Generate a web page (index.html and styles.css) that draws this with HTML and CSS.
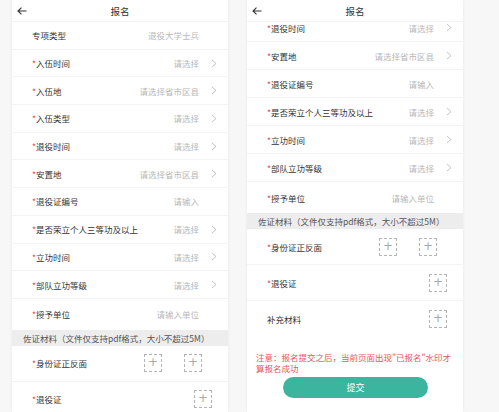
FILE: index.html
```html
<!DOCTYPE html>
<html lang="zh-CN">
<head>
  <meta charset="utf-8">
  <meta name="viewport" content="width=device-width, initial-scale=1.0">
  <title>报名</title>
  <link rel="stylesheet" href="styles.css">
</head>
<body>
  <div class="screens">

    <!-- First screen: top of the form -->
    <div class="phone phone-top">
      <div class="topbar">
        <svg class="back" width="10" height="8" viewBox="0 0 10 8"><path d="M9.5 4H1 M4.5 0.6L1 4l3.5 3.4" fill="none" stroke="#333" stroke-width="1.1"/></svg>
        <span class="title">报名</span>
      </div>
      <div class="form">
        <div class="row"><span class="label">专项类型</span><span class="value">退役大学士兵</span><span class="arrow"></span></div>
        <div class="row"><span class="label"><i>*</i>入伍时间</span><span class="value">请选择</span><span class="arrow"><svg width="6" height="9" viewBox="0 0 6 9"><polyline points="1,1 5,4.5 1,8" fill="none" stroke="#c4c4c4" stroke-width="1"/></svg></span></div>
        <div class="row"><span class="label"><i>*</i>入伍地</span><span class="value">请选择省市区县</span><span class="arrow"><svg width="6" height="9" viewBox="0 0 6 9"><polyline points="1,1 5,4.5 1,8" fill="none" stroke="#c4c4c4" stroke-width="1"/></svg></span></div>
        <div class="row"><span class="label"><i>*</i>入伍类型</span><span class="value">请选择</span><span class="arrow"><svg width="6" height="9" viewBox="0 0 6 9"><polyline points="1,1 5,4.5 1,8" fill="none" stroke="#c4c4c4" stroke-width="1"/></svg></span></div>
        <div class="row"><span class="label"><i>*</i>退役时间</span><span class="value">请选择</span><span class="arrow"><svg width="6" height="9" viewBox="0 0 6 9"><polyline points="1,1 5,4.5 1,8" fill="none" stroke="#c4c4c4" stroke-width="1"/></svg></span></div>
        <div class="row"><span class="label"><i>*</i>安置地</span><span class="value">请选择省市区县</span><span class="arrow"><svg width="6" height="9" viewBox="0 0 6 9"><polyline points="1,1 5,4.5 1,8" fill="none" stroke="#c4c4c4" stroke-width="1"/></svg></span></div>
        <div class="row"><span class="label"><i>*</i>退役证编号</span><span class="value">请输入</span><span class="arrow"></span></div>
        <div class="row"><span class="label"><i>*</i>是否荣立个人三等功及以上</span><span class="value">请选择</span><span class="arrow"><svg width="6" height="9" viewBox="0 0 6 9"><polyline points="1,1 5,4.5 1,8" fill="none" stroke="#c4c4c4" stroke-width="1"/></svg></span></div>
        <div class="row"><span class="label"><i>*</i>立功时间</span><span class="value">请选择</span><span class="arrow"><svg width="6" height="9" viewBox="0 0 6 9"><polyline points="1,1 5,4.5 1,8" fill="none" stroke="#c4c4c4" stroke-width="1"/></svg></span></div>
        <div class="row"><span class="label"><i>*</i>部队立功等级</span><span class="value">请选择</span><span class="arrow"><svg width="6" height="9" viewBox="0 0 6 9"><polyline points="1,1 5,4.5 1,8" fill="none" stroke="#c4c4c4" stroke-width="1"/></svg></span></div>
        <div class="row row-tall"><span class="label"><i>*</i>授予单位</span><span class="value">请输入单位</span><span class="arrow"></span></div>

        <div class="section">佐证材料（文件仅支持pdf格式，大小不超过5M）</div>

        <div class="row row-upload">
          <span class="label"><i>*</i>身份证正反面</span>
          <div class="uploads uploads-pair"><span class="upload">+</span><span class="upload">+</span></div>
        </div>
        <div class="row row-upload">
          <span class="label"><i>*</i>退役证</span>
          <div class="uploads"><span class="upload">+</span></div>
        </div>
      </div>
    </div>

    <!-- Second screen: scrolled to the bottom -->
    <div class="phone phone-bottom">
      <div class="topbar">
        <svg class="back" width="10" height="8" viewBox="0 0 10 8"><path d="M9.5 4H1 M4.5 0.6L1 4l3.5 3.4" fill="none" stroke="#333" stroke-width="1.1"/></svg>
        <span class="title">报名</span>
      </div>
      <div class="form">
        <div class="row"><span class="label"><i>*</i>退役时间</span><span class="value">请选择</span><span class="arrow"><svg width="6" height="9" viewBox="0 0 6 9"><polyline points="1,1 5,4.5 1,8" fill="none" stroke="#c4c4c4" stroke-width="1"/></svg></span></div>
        <div class="row"><span class="label"><i>*</i>安置地</span><span class="value">请选择省市区县</span><span class="arrow"><svg width="6" height="9" viewBox="0 0 6 9"><polyline points="1,1 5,4.5 1,8" fill="none" stroke="#c4c4c4" stroke-width="1"/></svg></span></div>
        <div class="row"><span class="label"><i>*</i>退役证编号</span><span class="value">请输入</span><span class="arrow"></span></div>
        <div class="row"><span class="label"><i>*</i>是否荣立个人三等功及以上</span><span class="value">请选择</span><span class="arrow"><svg width="6" height="9" viewBox="0 0 6 9"><polyline points="1,1 5,4.5 1,8" fill="none" stroke="#c4c4c4" stroke-width="1"/></svg></span></div>
        <div class="row"><span class="label"><i>*</i>立功时间</span><span class="value">请选择</span><span class="arrow"><svg width="6" height="9" viewBox="0 0 6 9"><polyline points="1,1 5,4.5 1,8" fill="none" stroke="#c4c4c4" stroke-width="1"/></svg></span></div>
        <div class="row"><span class="label"><i>*</i>部队立功等级</span><span class="value">请选择</span><span class="arrow"><svg width="6" height="9" viewBox="0 0 6 9"><polyline points="1,1 5,4.5 1,8" fill="none" stroke="#c4c4c4" stroke-width="1"/></svg></span></div>
        <div class="row row-tall"><span class="label"><i>*</i>授予单位</span><span class="value">请输入单位</span><span class="arrow"></span></div>

        <div class="section">佐证材料（文件仅支持pdf格式，大小不超过5M）</div>

        <div class="row row-upload">
          <span class="label"><i>*</i>身份证正反面</span>
          <div class="uploads uploads-pair"><span class="upload">+</span><span class="upload">+</span></div>
        </div>
        <div class="row row-upload">
          <span class="label"><i>*</i>退役证</span>
          <div class="uploads"><span class="upload">+</span></div>
        </div>
        <div class="row row-upload row-last">
          <span class="label">补充材料</span>
          <div class="uploads"><span class="upload">+</span></div>
        </div>

        <p class="notice">注意：报名提交之后，当前页面出现"已报名"水印才算报名成功</p>
        <button class="submit">提交</button>
      </div>
    </div>

  </div>
</body>
</html>
```

FILE: styles.css
```css
html, body {
  margin: 0;
  padding: 0;
}

body {
  width: 499px;
  height: 412px;
  overflow: hidden;
  background-color: #f7f7f7;
  font-family: "Noto Sans CJK SC", "Noto Sans", sans-serif;
  color: #333;
}

.screens {
  display: flex;
  gap: 19px;
  padding-left: 12px;
  height: 412px;
}

.phone {
  --row-h: 27.7px;
  width: 216px;
  height: 412px;
  background-color: #fff;
  box-shadow: 0 0 3px rgba(0, 0, 0, 0.07);
  overflow: hidden;
  display: flex;
  flex-direction: column;
}

.phone-bottom {
  --row-h: 28px;
}

/* Header */
.topbar {
  position: relative;
  z-index: 1;
  flex: none;
  height: 22px;
  display: flex;
  align-items: center;
  justify-content: center;
  background-color: #fff;
  border-bottom: 1px solid #f3f3f3;
  box-sizing: border-box;
}

.topbar .back {
  position: absolute;
  left: 5px;
  top: 7px;
}

.title {
  font-size: 9.5px;
  color: #333;
}

.phone-bottom .form {
  margin-top: -8px;
}

/* Form rows */
.row {
  display: flex;
  align-items: center;
  height: var(--row-h);
  padding: 0 11px 0 20px;
  border-bottom: 1px solid #f3f3f3;
  box-sizing: border-box;
  font-size: 8.5px;
}

.row-tall {
  height: 31px;
  border-bottom: none;
}

.row-upload {
  height: 36px;
}

.row-last {
  border-bottom: none;
}

.label {
  flex: 1;
  color: #333;
  white-space: nowrap;
}

.label i {
  font-style: normal;
  color: #e5484d;
}

.value {
  color: #b8b8b8;
  white-space: nowrap;
}

.arrow {
  width: 6px;
  height: 9px;
  margin-left: 12px;
  display: flex;
}

/* Evidence section */
.section {
  height: 16px;
  line-height: 16px;
  padding-left: 11px;
  background-color: #ededed;
  color: #555;
  font-size: 8.5px;
  white-space: nowrap;
}

.uploads {
  display: flex;
  gap: 22px;
  margin-right: 5px;
}

.uploads-pair {
  margin-right: 15px;
}

.upload {
  width: 18px;
  height: 18px;
  box-sizing: border-box;
  border: 1px dashed #b5b5b5;
  color: #aaa;
  font-family: "DejaVu Sans", sans-serif;
  font-size: 12px;
  line-height: 15px;
  text-align: center;
}

/* Footer */
.notice {
  margin: 15px 4px 3px 9px;
  color: #e2585a;
  font-size: 8.5px;
  line-height: 11px;
}

.submit {
  display: block;
  width: 145px;
  height: 21px;
  margin-left: 36px;
  border: none;
  border-radius: 11px;
  background-color: #3cb59f;
  color: #fff;
  font-family: inherit;
  font-size: 9px;
  padding: 0;
}
```
